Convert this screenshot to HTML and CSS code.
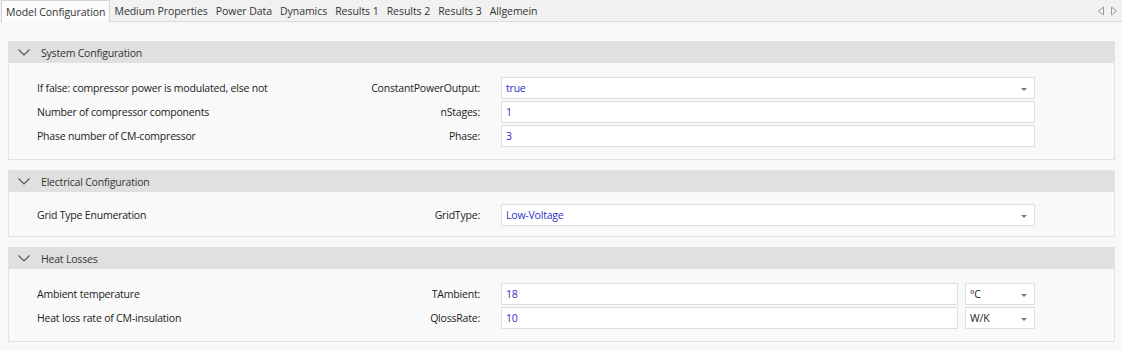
FILE: index.html
```html
<!DOCTYPE html>
<html lang="en">
<head>
  <meta charset="UTF-8" />
  <title>Model Configuration</title>
  <link rel="stylesheet" href="styles.css">
</head>
<body>

<div class="tabbar">
  <div class="tabs">
    <span class="tab active">Model Configuration</span>
    <span class="tab">Medium Properties</span>
    <span class="tab">Power Data</span>
    <span class="tab">Dynamics</span>
    <span class="tab">Results 1</span>
    <span class="tab">Results 2</span>
    <span class="tab">Results 3</span>
    <span class="tab">Allgemein</span>
  </div>
  <div class="scroll">
    <svg width="8" height="10" viewBox="0 0 8 10"><path d="M6.5 1 L1.5 5 L6.5 9 Z" /></svg>
    <svg width="8" height="10" viewBox="0 0 8 10"><path d="M1.5 1 L6.5 5 L1.5 9 Z" /></svg>
  </div>
</div>

<div class="content">

  <!-- System Configuration -->
  <div class="section">
    <div class="section-head">
      <svg class="chevron" width="12" height="7" viewBox="0 0 12 7"><path d="M0.5 0.5 L6 6 L11.5 0.5" /></svg>
      <span>System Configuration</span>
    </div>
    <div class="section-body">
      <div class="row">
        <span class="desc">If false: compressor power is modulated, else not</span>
        <span class="name">ConstantPowerOutput:</span>
        <div class="field">
          <div class="box select"><span class="value">true</span><span class="arrow"></span></div>
        </div>
      </div>
      <div class="row">
        <span class="desc">Number of compressor components</span>
        <span class="name">nStages:</span>
        <div class="field">
          <div class="box"><span class="value">1</span></div>
        </div>
      </div>
      <div class="row">
        <span class="desc">Phase number of CM-compressor</span>
        <span class="name">Phase:</span>
        <div class="field">
          <div class="box"><span class="value">3</span></div>
        </div>
      </div>
    </div>
  </div>

  <!-- Electrical Configuration -->
  <div class="section">
    <div class="section-head">
      <svg class="chevron" width="12" height="7" viewBox="0 0 12 7"><path d="M0.5 0.5 L6 6 L11.5 0.5" /></svg>
      <span>Electrical Configuration</span>
    </div>
    <div class="section-body short">
      <div class="row">
        <span class="desc">Grid Type Enumeration</span>
        <span class="name">GridType:</span>
        <div class="field">
          <div class="box select"><span class="value">Low-Voltage</span><span class="arrow"></span></div>
        </div>
      </div>
    </div>
  </div>

  <!-- Heat Losses -->
  <div class="section">
    <div class="section-head">
      <svg class="chevron" width="12" height="7" viewBox="0 0 12 7"><path d="M0.5 0.5 L6 6 L11.5 0.5" /></svg>
      <span>Heat Losses</span>
    </div>
    <div class="section-body">
      <div class="row">
        <span class="desc">Ambient temperature</span>
        <span class="name">TAmbient:</span>
        <div class="field">
          <div class="box"><span class="value">18</span></div>
          <div class="box select unit"><span class="unit-text">°C</span><span class="arrow"></span></div>
        </div>
      </div>
      <div class="row">
        <span class="desc">Heat loss rate of CM-insulation</span>
        <span class="name">QlossRate:</span>
        <div class="field">
          <div class="box"><span class="value">10</span></div>
          <div class="box select unit"><span class="unit-text">W/K</span><span class="arrow"></span></div>
        </div>
      </div>
    </div>
  </div>

</div>

</body>
</html>
```

FILE: styles.css
```css
body {
  margin: 0;
  background-color: #f8f8f8;
  font-family: "Open Sans", "Noto Sans", sans-serif;
  font-size: 10.5px;
  letter-spacing: -0.2px;
  color: #222222;
}

/* tab strip */
.tabbar {
  height: 22px;
  display: flex;
  justify-content: space-between;
  align-items: stretch;
  background-color: #f1f1f1;
  border-bottom: 1px solid #dcdcdc;
  box-sizing: border-box;
}

.tabs {
  display: flex;
  padding-left: 1px;
}

.tab {
  display: flex;
  align-items: center;
  padding: 0 4px;
  font-size: 10.5px;
  letter-spacing: -0.05px;
  color: #333333;
  white-space: nowrap;
}

.tab.active {
  background-color: #fbfbfb;
  border: 1px solid #d6d6d6;
  border-bottom: none;
  margin-bottom: -1px;
}

.scroll {
  display: flex;
  align-items: center;
  gap: 5px;
  padding-right: 4px;
}

.scroll path {
  fill: none;
  stroke: #9a9a9a;
  stroke-width: 1;
}

/* sections */
.content {
  padding: 19px 7px 0 8px;
  display: flex;
  flex-direction: column;
  gap: 10px;
}

.section {
  border: 1px solid #e2e2e2;
  background-color: #f9f9f9;
}

.section-head {
  height: 21px;
  display: flex;
  align-items: center;
  gap: 11px;
  padding-left: 9px;
  background-color: #e0e0e0;
  color: #333333;
}

.chevron path {
  fill: none;
  stroke: #555555;
  stroke-width: 1.1;
}

.section-body {
  padding: 14px 0 12px 28px;
  display: flex;
  flex-direction: column;
  gap: 2px;
}

.section-body.short {
  padding: 12px 0 10px 28px;
}

.row {
  display: grid;
  grid-template-columns: 290px 154px 534px;
  column-gap: 10px;
  align-items: center;
}

.desc {
  color: #222222;
}

.name {
  text-align: right;
  padding-right: 11px;
}

.field {
  display: flex;
  gap: 7px;
}

.box {
  flex: 1;
  height: 22px;
  box-sizing: border-box;
  display: flex;
  align-items: center;
  justify-content: space-between;
  padding: 0 7px 0 4px;
  background-color: #ffffff;
  border: 1px solid #dedede;
}

.box.unit {
  flex: 0 0 70px;
}

.value {
  color: #3030c8;
}

.unit-text {
  color: #222222;
}

.arrow {
  width: 0;
  height: 0;
  border-left: 3px solid transparent;
  border-right: 3px solid transparent;
  border-top: 3px solid #777777;
  margin-top: 2px;
}
```
